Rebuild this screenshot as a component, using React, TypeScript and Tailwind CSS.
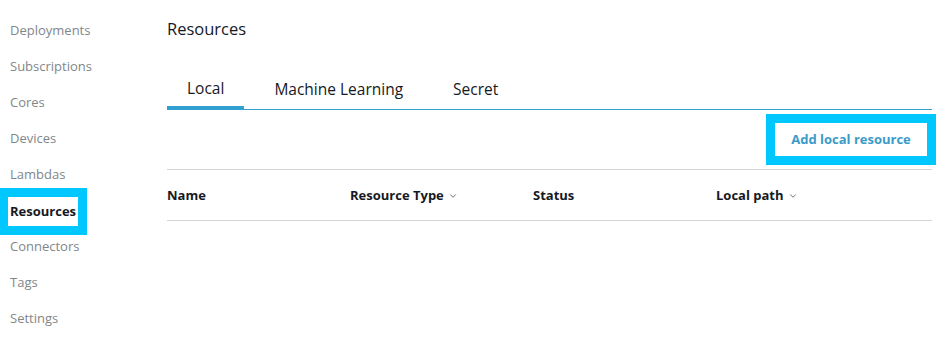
import { ChevronDown } from "lucide-react";
import React from "react";

const navItems = [
  "Deployments",
  "Subscriptions",
  "Cores",
  "Devices",
  "Lambdas",
  "Resources",
  "Connectors",
  "Tags",
  "Settings",
];

const tabs = ["Local", "Machine Learning", "Secret"];

const columns = [
  { label: "Name", sort: false },
  { label: "Resource Type", sort: true },
  { label: "Status", sort: false },
  { label: "Local path", sort: true },
];

export default function App() {
  return (
    <div className="flex h-[357px] w-[950px] bg-white font-['Open_Sans',sans-serif] text-[#16191f]">
      <nav className="w-[167px] shrink-0 pt-[13px] pl-[10px]">
        {navItems.map((item) =>
          item === "Resources" ? (
            <div key={item} className="flex h-[36px] items-center">
              <span className="-ml-[2px] inline-block bg-white px-[2px] py-[6px] text-[13px] leading-[17px] font-bold text-[#16191f] outline-[9px] outline-[#00c8ff] outline-solid">
                {item}
              </span>
            </div>
          ) : (
            <div
              key={item}
              className="flex h-[36px] items-center text-[13px] text-[#7f8789]"
            >
              {item}
            </div>
          )
        )}
      </nav>

      <main className="w-[765px] shrink-0">
        <h1 className="pt-[17px] text-[16.5px] leading-[24px]">Resources</h1>

        <div className="mt-[37px] flex items-end border-b border-[#2fa0cf]">
          {tabs.map((tab, i) =>
            i === 0 ? (
              <div
                key={tab}
                className="-mb-px border-b-4 border-[#2fa0cf] px-[20px] pb-[8px] text-[15.5px] leading-[20px]"
              >
                {tab}
              </div>
            ) : (
              <div
                key={tab}
                className="ml-[10px] border-b-2 border-transparent px-[20px] pb-[8px] text-[15.5px] leading-[20px]"
              >
                {tab}
              </div>
            )
          )}
        </div>

        <div className="flex justify-end border-b border-[#d5d5d5] pt-[13px] pb-[13px]">
          <button className="mr-[5px] h-[33px] w-[152px] bg-white text-[13px] font-bold text-[#3a9bc9] outline-[9px] outline-[#00c8ff] outline-solid">
            Add local resource
          </button>
        </div>

        <div className="grid h-[51px] grid-cols-[183px_183px_183px_1fr] items-center border-b border-[#d5d5d5] pt-px">
          {columns.map((col) => (
            <div
              key={col.label}
              className="flex items-center gap-[4px] text-[13px] font-bold"
            >
              {col.label}
              {col.sort && (
                <ChevronDown className="h-[10px] w-[10px]" strokeWidth={1.5} />
              )}
            </div>
          ))}
        </div>
      </main>
    </div>
  );
}
